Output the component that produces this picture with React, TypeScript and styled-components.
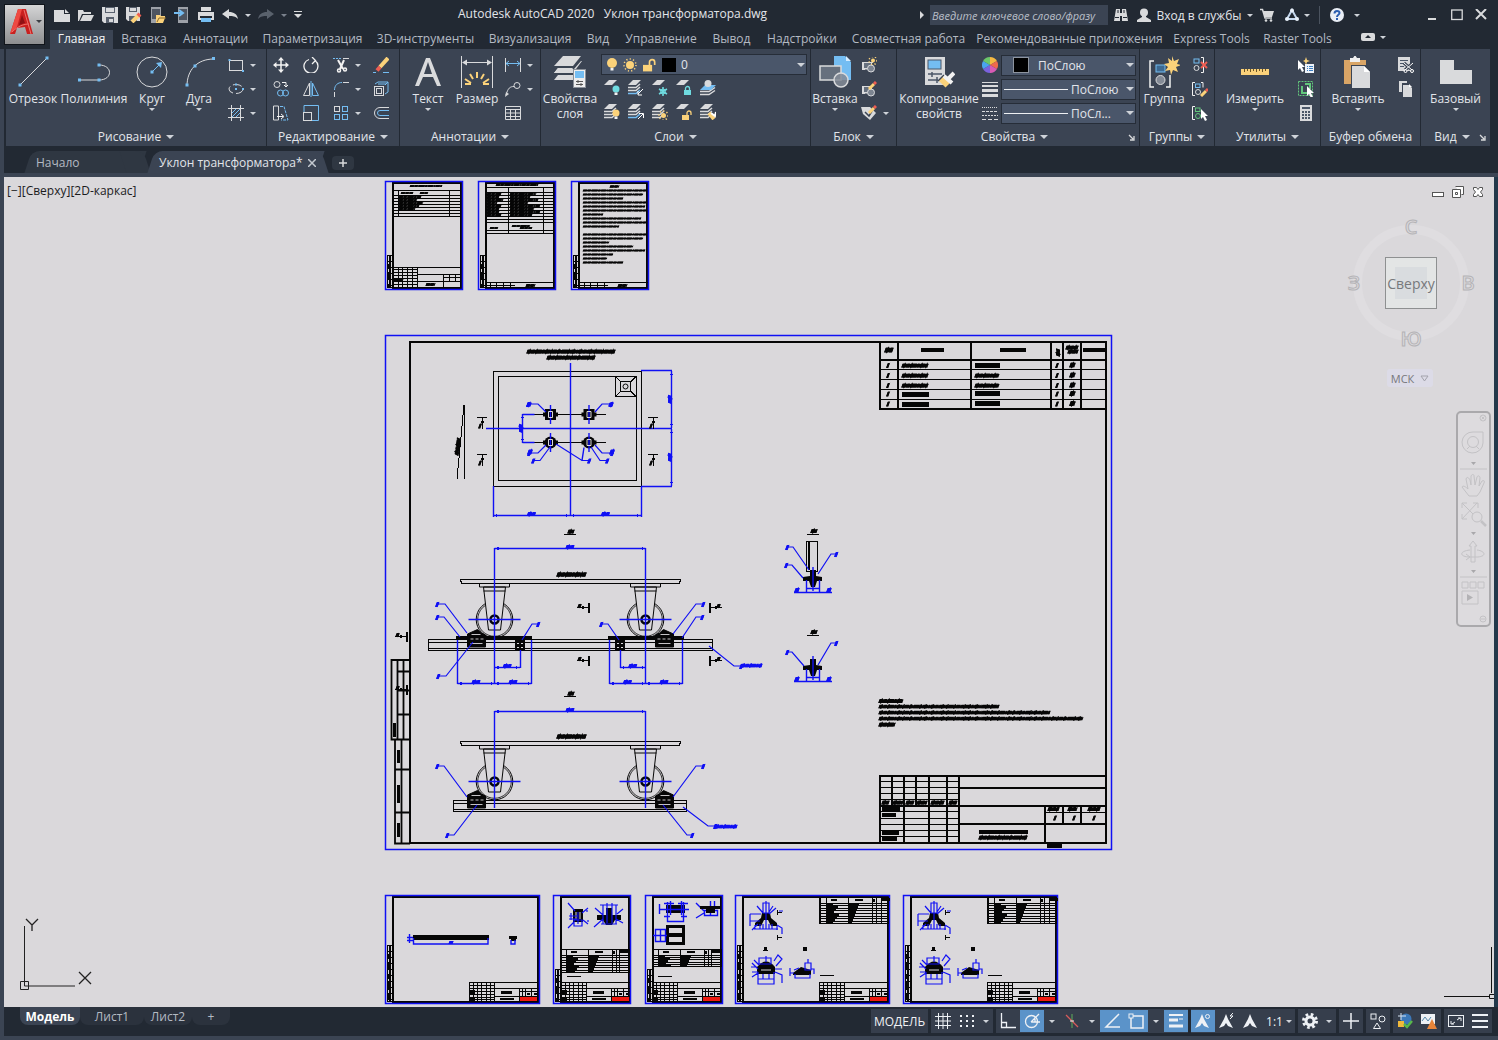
import React from "react";
import styled, { createGlobalStyle, css } from "styled-components";

const c = {
  bar: "#222933",
  panel: "#3b4453",
  field: "#4a566a",
  line: "#262d38",
  text: "#e2e5ea",
  dim: "#b4bac3",
  blue: "#74bdf2",
  grey: "#d9dadc",
  yellow: "#fbd27a",
  teal: "#6fdbe0",
  red: "#ee5d52",
  canvas: "#dad8db",
};

const Global = createGlobalStyle`
  *, *::before, *::after { box-sizing: border-box; }
  body { margin: 0; background: ${c.bar}; }
  body, button, input, select { font-family: "Open Sans", "Noto Sans", sans-serif; font-size: 12px; }
  button { margin: 0; padding: 0; border: 0; background: none; color: inherit; cursor: pointer; }
  svg { display: block; flex: none; }
`;

const Page = styled.div`
  display: flex;
  flex-direction: column;
  min-height: 100vh;
  color: ${c.text};
`;

const Arrow = styled.span<{ $big?: boolean; $color?: string }>`
  flex: none;
  width: 0;
  height: 0;
  border: solid transparent;
  border-width: ${(p) => (p.$big ? "4px 4px 0" : "3px 3px 0")};
  border-top-color: ${(p) => p.$color || "#cfd3d9"};
`;

/* ---------- header ---------- */

const Header = styled.header`
  display: grid;
  grid-template-columns: 45px minmax(0, 1fr);
  height: 49px;
`;

const AppButton = styled.button`
  && {
    margin: 4px 0 4px 4px;
    width: 41px;
    height: 41px;
    border: 1px solid #11151b;
    background: linear-gradient(#d5d5d6, #8d8e90);
    display: flex;
    align-items: center;
    gap: 1px;
    padding: 0 0 6px 4px;
  }
`;

const TitleBar = styled.div`
  display: flex;
  align-items: center;
  height: 30px;
`;

const QuickAccess = styled.div`
  display: flex;
  align-items: center;
  padding-left: 5px;
`;

const QuickButton = styled.button<{ $w?: number }>`
  display: grid;
  place-items: center;
  width: ${(p) => p.$w || 24}px;
  height: 24px;
`;

const DocTitle = styled.h1`
  flex: 1;
  margin: 0;
  font-size: 12px;
  line-height: 28px;
  font-weight: 400;
  text-align: center;
  white-space: pre;
  align-self: flex-start;
`;

const SearchBox = styled.input`
  width: 178px;
  height: 20px;
  border: 0;
  padding: 0 2px;
  margin: 0 3px 0 5px;
  background: ${c.panel};
  color: ${c.text};
  &::placeholder {
    color: #b9bfc8;
    font-size: 11px;
    font-style: italic;
    opacity: 1;
  }
`;

const InfoButton = styled.button<{ $w: number; $gap?: number }>`
  display: flex;
  align-items: center;
  justify-content: center;
  gap: ${(p) => p.$gap || 5}px;
  width: ${(p) => p.$w}px;
  height: 24px;
  white-space: nowrap;
`;

const Divider = styled.span`
  width: 1px;
  height: 18px;
  background: #4b535f;
`;

const WindowButtons = styled.div`
  display: flex;
  margin-left: 50px;
  padding-right: 5px;
`;

const TabBar = styled.nav`
  display: flex;
  align-items: flex-end;
  height: 19px;
  padding-left: 5px;
`;

const RibbonTab = styled.button<{ $w: number; $active?: boolean }>`
  && {
    width: ${(p) => p.$w}px;
    height: 19px;
    line-height: 18px;
    white-space: nowrap;
    display: flex;
    justify-content: center;
    color: ${(p) => (p.$active ? "#f2f4f7" : c.dim)};
    background: ${(p) => (p.$active ? c.panel : "none")};
  }
`;

/* ---------- ribbon ---------- */

const Workspace = styled.div`
  flex: 1;
  display: flex;
  flex-direction: column;
  border: solid ${c.panel};
  border-width: 0 0 4px 4px;
`;

const Ribbon = styled.div`
  display: flex;
  gap: 1px;
  height: 97px;
  margin: 0 8px 0 2px;
`;

const Panel = styled.section<{ $w: number; $grow?: boolean }>`
  flex: ${(p) => (p.$grow ? 1 : 0)} 0 ${(p) => p.$w}px;
  display: flex;
  flex-direction: column;
  background: ${c.panel};
`;

const PanelBody = styled.div`
  display: flex;
  height: 79px;
`;

const PanelTitle = styled.footer`
  display: flex;
  align-items: center;
  height: 18px;
  padding: 0 4px;
`;

const PanelName = styled.button`
  && {
    flex: 1;
    display: flex;
    align-items: center;
    justify-content: center;
    gap: 5px;
    line-height: 16px;
    white-space: nowrap;
  }
`;

const BigTool = styled.button<{ $w: number }>`
  && {
    flex: none;
    display: flex;
    flex-direction: column;
    align-items: center;
    width: ${(p) => p.$w}px;
    padding-top: 7px;
    line-height: 15px;
    white-space: pre-line;
  }
`;

const BigLabel = styled.span`
  display: flex;
  justify-content: center;
  text-align: center;
  margin: 3px 0 2px;
  white-space: pre;
`;

const ToolGrid = styled.div<{ $cols: string; $pad: number; $top?: number }>`
  display: grid;
  grid-template-columns: ${(p) => p.$cols};
  grid-auto-rows: 24px;
  align-content: start;
  padding: ${(p) => p.$top ?? 4}px 0 0 ${(p) => p.$pad}px;
`;

const SmallTool = styled.button`
  && {
    display: flex;
    align-items: center;
    gap: 6px;
  }
`;

const Stack = styled.div`
  flex: 1;
  display: flex;
  flex-direction: column;
  gap: 1px;
  padding: 5px 3px 0 2px;
`;

const PropRows = styled.div`
  flex: 1;
  display: grid;
  grid-auto-rows: 24px;
  padding: 4px 3px 0 1px;
`;

const PropRow = styled.div`
  display: grid;
  grid-template-columns: 16px minmax(0, 1fr);
  align-items: center;
  gap: 3px;
`;

const Combo = styled.div`
  display: flex;
  align-items: center;
  gap: 3px;
  height: 21px;
  padding: 0 1px 0 4px;
  border: 1px solid ${c.line};
  background: ${c.field};
`;

const Select = styled.select`
  flex: 1;
  min-width: 0;
  height: 18px;
  padding: 0;
  border: 0;
  appearance: none;
  background: transparent;
  color: ${c.text};
  option { color: #111; }
`;

const Swatch = styled.span<{ $edge?: boolean }>`
  flex: none;
  width: ${(p) => (p.$edge ? 16 : 14)}px;
  height: ${(p) => (p.$edge ? 16 : 14)}px;
  margin: 0 ${(p) => (p.$edge ? 6 : 2)}px 0 ${(p) => (p.$edge ? 7 : 1)}px;
  background: #000;
  border: ${(p) => (p.$edge ? "1px solid #8d949f" : 0)};
`;

const Stroke = styled.span`
  flex: none;
  width: 64px;
  height: 1px;
  margin-left: -2px;
  background: #eef0f3;
`;

/* ---------- file tabs ---------- */

const FileTabs = styled.nav`
  display: flex;
  align-items: flex-end;
  height: 31px;
  padding-left: 16px;
  border-bottom: 4px solid ${c.panel};
  background: ${c.bar};
`;

const FileTab = styled.div<{ $w: number; $active?: boolean }>`
  position: relative;
  display: flex;
  align-items: center;
  width: ${(p) => p.$w}px;
  height: 22px;
  padding: 2px 0 0 16px;
  z-index: 0;
  color: ${(p) => (p.$active ? c.text : c.dim)};
  &::before {
    content: "";
    position: absolute;
    z-index: -1;
    inset: 0 0 0 8px;
    transform: skewX(-18deg);
    border-radius: 8px 0 0 0;
    background: ${(p) => (p.$active ? c.panel : "#2f3742")};
  }
  &::after {
    content: "";
    position: absolute;
    z-index: -1;
    inset: 0 -4px 0 auto;
    width: 24px;
    transform: skewX(18deg);
    border-radius: 0 8px 0 0;
    background: ${(p) => (p.$active ? c.panel : "#2f3742")};
  }
`;

const TabName = styled.button`
  line-height: 20px;
  white-space: nowrap;
`;

const CloseTab = styled.button`
  && {
    margin-left: 4px;
    display: grid;
    place-items: center;
    width: 10px;
    height: 20px;
  }
`;

const AddTab = styled.button`
  && {
    width: 22px;
    height: 14px;
    margin: 0 0 3px 11px;
    border-radius: 4px;
    background: #2f3742;
    display: grid;
    place-items: center;
  }
`;

/* ---------- drawing area ---------- */

const Viewport = styled.main`
  position: relative;
  flex: 1;
  min-height: 600px;
  overflow: hidden;
  border-right: 4px solid #22384a;
  background: ${c.canvas};
  color: #1b1b1d;
`;

const ModelSpace = styled.svg`
  position: absolute;
  inset: 0;
  width: 100%;
  height: 100%;
`;

const ViewLabel = styled.div`
  position: absolute;
  left: 3px;
  top: 5px;
  line-height: 17px;
`;

const DocControls = styled.div`
  position: absolute;
  right: 9px;
  top: 7px;
  display: flex;
  gap: 6px;
`;

const Ucs = styled.svg`
  position: absolute;
  left: 14px;
  bottom: 11px;
`;

const Cursor = styled.svg`
  position: absolute;
  right: 0;
  bottom: 0;
`;

const ViewCube = styled.div`
  position: absolute;
  right: 18px;
  top: 40px;
  width: 130px;
  height: 132px;
  display: grid;
  grid-template-columns: 16px 1fr 16px;
  grid-template-rows: 20px 1fr 20px;
  place-items: center;
  &::before {
    content: "";
    position: absolute;
    inset: 8px 7px;
    border: 9px solid #dfdde0;
    border-radius: 50%;
  }
`;

const Compass = styled.button<{ $area: string }>`
  && {
    position: relative;
    grid-area: ${(p) => p.$area};
    font-size: 20px;
    line-height: 20px;
    font-weight: 600;
    color: ${c.canvas};
    -webkit-text-stroke: 1px #b4b3b6;
  }
`;

const CubeFace = styled.button`
  && {
    position: relative;
    grid-area: 2 / 2;
    width: 52px;
    height: 52px;
    border: 1px solid #8e9091;
    background: linear-gradient(#d9dcdf, #d9dcdf) center / 32px 32px no-repeat #e3e5e5;
    color: #77797c;
    font-size: 14px;
    display: flex;
    align-items: center;
    justify-content: center;
    white-space: nowrap;
  }
`;

const Wcs = styled.button`
  && {
    position: absolute;
    right: 61px;
    top: 192px;
    width: 46px;
    height: 18px;
    border-radius: 3px;
    background: #dcdbe7;
    color: #77777c;
    font-size: 11px;
    display: flex;
    align-items: center;
    justify-content: center;
    gap: 6px;
  }
`;

const NavBar = styled.div`
  position: absolute;
  right: 3px;
  top: 234px;
  width: 35px;
  height: 216px;
  border: 2px solid #aaa9ac;
  border-radius: 5px;
  background: #dddbde;
`;

/* ---------- status bar ---------- */

const StatusBar = styled.footer`
  display: flex;
  justify-content: space-between;
  height: 29px;
  background: ${c.bar};
`;

const LayoutTabs = styled.div`
  display: flex;
  padding-left: 16px;
`;

const LayoutTab = styled.button<{ $w: number; $active?: boolean }>`
  && {
    width: ${(p) => p.$w}px;
    height: 18px;
    line-height: 17px;
    border-radius: 0 0 8px 8px;
    color: ${(p) => (p.$active ? "#fff" : c.dim)};
    font-weight: ${(p) => (p.$active ? 700 : 400)};
    background: ${(p) => (p.$active ? c.panel : "#2b323d")};
  }
`;

const StatusTools = styled.div`
  display: flex;
  gap: 3px;
  padding: 2px 6px 3px 0;
`;

const StatusGroup = styled.div`
  display: flex;
  align-items: center;
  background: #363e4c;
`;

const StatusButton = styled.button<{ $w?: number; $on?: boolean }>`
  && {
    width: ${(p) => p.$w || 24}px;
    height: 22px;
    display: flex;
    align-items: center;
    justify-content: center;
    white-space: nowrap;
    color: #f0f2f5;
    ${(p) => p.$on && css`background: #5b93c9;`}
  }
`;

/* ---------- icons ---------- */

const S = ({ n = 16, w, h, box, children }: any) => (
  <svg width={w || n} height={h || n} viewBox={box || `0 0 ${w || n} ${h || n}`} fill="none" stroke={c.grey} aria-hidden="true">
    {children}
  </svg>
);
const F = { stroke: "none" };

const Dot = ({ x, y, s = 3 }: any) => <rect x={x - s / 2} y={y - s / 2} width={s} height={s} fill={c.blue} stroke="none" />;

const LogoA = () => (
  <S w={26} h={30}>
    <path {...F} fill="#c9201f" d="M9 2h8l7 25h-6l-2-7-8 1-2 6H1z" />
    <path {...F} fill="#ee4a42" d="M9 2h4L8 20l-7 7z" />
    <path {...F} fill="#8f1114" d="M13 8l3 8-6 2z" />
    <path stroke="#f0706a" d="M3 25c6-6 12-8 17-8M15 3l7 24" />
  </S>
);

const I = {
  newFile: <S><path {...F} fill={c.grey} d="M0 3h10v4h6v8H0z" /><path {...F} fill={c.grey} d="M11 2l4 4h-4z" /></S>,
  open: <S><path {...F} fill={c.grey} d="M0 3h5l1 2h7v2H4L1 14H0z" /><path {...F} fill={c.grey} d="M5 8h11l-3 6H2z" /></S>,
  save: <S><path {...F} fill={c.grey} d="M0 0h16v16H2l-2-2z" /><path {...F} fill="#59616e" d="M3 0h10v6H3zM4 10h8v6H4z" /><path {...F} fill={c.grey} d="M4 1h8v4H4zM7 12h4v3H7z" /></S>,
  saveAs: <S><path {...F} fill={c.grey} d="M0 0h14v14H2l-2-2z" /><path {...F} fill="#59616e" d="M3 0h8v5H3zM3 9h8v5H3z" /><path {...F} fill={c.grey} d="M4 1h6v3H4z" /><path stroke={c.yellow} strokeWidth="4" d="M6 15l7-7" /><path stroke={c.red} strokeWidth="4" d="M12 9l2-2" /></S>,
  openMobile: <S><path {...F} fill="#9da1a8" d="M1 0h10v16H1z" /><path {...F} fill="#4e5561" d="M2 2h8v10H2z" /><path {...F} fill={c.yellow} d="M6 8h4l1 1h4v2l-2 5H6z" /><path stroke="#8b6a2c" d="M7 15l2-4h7" /></S>,
  saveMobile: <S><path {...F} fill="#9da1a8" d="M4 0h10v16H4z" /><path {...F} fill="#4e5561" d="M5 2h8v11H5z" /><path stroke={c.blue} strokeWidth="2" d="M0 6h8M5 3l4 3-4 3" /></S>,
  print: <S><path {...F} fill={c.grey} d="M3 0h10v4H3zM0 5h16v8H0z" /><path {...F} fill={c.bar} d="M2 9h12v2H2z" /><path {...F} fill={c.blue} d="M3 11h10v4H3z" /></S>,
  undo: <S><path {...F} fill={c.grey} d="M0 7l7-5v3c5 0 8 2 9 7-3-3-5-3-9-3v3z" /></S>,
  redo: <S><path {...F} fill="#59616c" d="M16 7L9 2v3C4 5 1 7 0 12c3-3 5-3 9-3v3z" /></S>,
  custom: <S w={8} h={8}><path stroke={c.grey} d="M0 .5h8" /><path {...F} fill={c.grey} d="M0 3h8L4 7z" /></S>,
  binoculars: <S n={14}><path {...F} fill={c.grey} d="M2 1h4v4h2V1h4l2 12H8V8H6v5H0z" /><path stroke={c.bar} d="M1 9.500h4M9 9.500h4M4 2v3M10 2v3" /></S>,
  user: <S n={14}><circle {...F} fill={c.grey} cx="7" cy="4.500" r="4" /><path {...F} fill={c.grey} d="M5 7h4v2l5 3v2H0v-2l5-3z" /></S>,
  cart: <S n={14}><path {...F} fill={c.grey} d="M3 3h11l-2 6H5z" /><path stroke={c.grey} strokeWidth="1.500" d="M0 1.500h2.500L5 10h7" /><circle {...F} fill={c.grey} cx="6" cy="12.500" r="1.300" /><circle {...F} fill={c.grey} cx="11" cy="12.500" r="1.300" /></S>,
  a360: <S n={14}><path stroke="#c5d8ee" strokeWidth="2" d="M7 2L2 11h10z" /><circle {...F} fill="#e8f0fa" cx="7" cy="2.500" r="2" /><circle {...F} fill="#e8f0fa" cx="2" cy="11" r="2" /><circle {...F} fill="#e8f0fa" cx="12" cy="11" r="2" /></S>,
  min: <S n={12}><path stroke={c.grey} strokeWidth="2" d="M2 10h8" /></S>,
  max: <S n={12}><rect stroke={c.grey} strokeWidth="1.300" x=".7" y="1" width="10.500" height="9.500" /></S>,
  close: <S n={12}><path stroke={c.grey} strokeWidth="2" d="M1 0l10 10M11 0L1 10" /></S>,

  line: <S n={32}><path d="M3 29L31 1" /><Dot x={3} y={29} /><Dot x={30} y={2} /></S>,
  pline: <S n={32}><path d="M1 24h20c14 0 14-15 0-15" /><Dot x={1.500} y={24} /><Dot x={21} y={24} /><Dot x={21} y={9} /></S>,
  circle: <S n={32}><circle cx="16" cy="16" r="15" /><path stroke={c.blue} d="M17 15l6-6" /><path {...F} fill={c.blue} d="M26 6l-1 6-5-5z" /><Dot x={16} y={16} /></S>,
  arc: <S n={32}><path d="M4 30C4 14 14 3 31 3" /><Dot x={4} y={29} /><Dot x={12} y={10} /><Dot x={30.500} y={2.500} /></S>,
  rect: <S><rect x="1.500" y="3.500" width="13" height="10" /><Dot x={1.500} y={3} s={2} /><Dot x={15} y={14} s={2} /></S>,
  ellipse: <S><ellipse cx="8" cy="8" rx="7" ry="4.500" strokeDasharray="9 3" /><Dot x={8} y={8} s={2} /><Dot x={15} y={8} s={2} /><Dot x={8} y={3.500} s={2} /></S>,
  hatch: <S><path d="M3.500 0v16M12.500 0v16M0 3.500h16M0 12.500h16" /><path stroke={c.blue} d="M4 8l4-4M4 12l8-8M8 12l4-4" /></S>,
  move: <S><path stroke="#f2f2f2" strokeWidth="1.500" d="M8 2v12M2 8h12" /><path {...F} fill="#f2f2f2" d="M8 0l3 3.500H5zM8 16l3-3.500H5zM0 8l3.500-3v6zM16 8l-3.500-3v6z" /></S>,
  rotate: <S><path stroke="#f2f2f2" strokeWidth="1.300" d="M12 3.500a7 7 0 1 1-6-1" /><path stroke="#f2f2f2" strokeWidth="1.300" d="M9 0l3.500 3.500L9 7" /></S>,
  trim: <S><path stroke={c.blue} strokeDasharray="2 1" d="M0 1.500h9" /><path d="M10 1.500h6" /><path stroke="#f2f2f2" strokeWidth="2" d="M5 3l5 9M11 3L7 12" /><circle stroke="#f2f2f2" strokeWidth="1.500" cx="6" cy="13.500" r="1.500" /><circle stroke="#f2f2f2" strokeWidth="1.500" cx="12" cy="12.500" r="1.500" /></S>,
  erase: <S><path stroke={c.blue} d="M0 15.500h3M10 15.500h6" /><path stroke={c.yellow} strokeWidth="4" d="M7 10l8-9" /><path stroke={c.red} strokeWidth="4" d="M4 13.500L7 10" /></S>,
  copy: <S><circle cx="4" cy="3.500" r="3" /><path stroke="#f2f2f2" d="M9 1.500h4v4M11 4l2 2 2-2" /><circle stroke={c.blue} cx="7.500" cy="12" r="3" /><circle stroke={c.blue} cx="12.500" cy="12" r="3" /></S>,
  mirror: <S><path d="M6.500 2v12.500h-6z" /><path stroke={c.blue} d="M9.500 2v12.500h6zM8 0v16" /></S>,
  fillet: <S><path stroke={c.blue} d="M1.500 9C1.500 4 5 1.500 9 1.500" /><path d="M10 1.500h6M1.500 11v5" /></S>,
  explode: <S><rect x="1.500" y="5.500" width="9" height="9" /><rect x="3.500" y="7.500" width="5" height="5" /><path stroke={c.blue} d="M2 3l3-2h10l-3 3M15 1v10l-3 2M5 3h8" /></S>,
  stretch: <S><path d="M.5 1h5v14h-5z" /><path stroke={c.blue} strokeDasharray="3 1" d="M7 1.500h4L15 15H8" /><path stroke="#f2f2f2" d="M4 11.500h6M8 9l3 2.500L8 14" /></S>,
  scale: <S><path stroke={c.blue} d="M1 7V.5h14.500v15H9" /><rect x=".5" y="7.500" width="8" height="8" /></S>,
  array: <S><rect x="1.500" y="1.500" width="5" height="5" /><g stroke={c.blue}><rect x="9.500" y="1.500" width="5" height="5" /><rect x="1.500" y="9.500" width="5" height="5" /><rect x="9.500" y="9.500" width="5" height="5" /></g></S>,
  offset: <S><path d="M16 2.500H7a5.500 5.500 0 0 0 0 11h9" /><path stroke={c.blue} d="M16 5.500H7a2.500 2.500 0 0 0 0 5h9" /></S>,
  text: <S n={32}><path {...F} fill={c.grey} d="M14 2h4l11 28h-4l-4-9H11l-4 9H3zm2 4l-4 12h8z" fillRule="evenodd" /></S>,
  dimension: <S n={32}><path d="M.5 0v32M31.500 0v32M3 6.500h26" /><path {...F} fill={c.grey} d="M1 6.500l5-3v6zM31 6.500l-5-3v6z" /><g stroke={c.yellow} strokeWidth="2"><path d="M16 16v6M9 18l3 5M23 18l-3 5M4 23l6 4M28 23l-6 4M4 28h6M28 28h-6" /></g></S>,
  dimLinear: <S><path d="M.5 1v14M15.500 1v14" /><path stroke={c.blue} d="M1 6.500h14M4 4L1 6.500 4 9M12 4l3 2.500L12 9" /></S>,
  leader: <S><path d="M1 14C3 7 5 5.500 9 5.500" /><circle cx="12" cy="4.500" r="3" /><path {...F} fill={c.grey} d="M0 16l1-5 3 2z" /></S>,
  table: <S><path d="M.5 1.500h15v13H.5zM.5 4.500h15M.5 8h15M.5 11.500h15M5.500 4v10M10.500 4v10" /></S>,
  layerProps: <S n={32}><g {...F} fill={c.grey}><path d="M9 0h18l-8 10H0z" /><path d="M4 12l-4 5h19l9-12-1 0-7 8H4z" /><path d="M4 19l-4 5h19v-5z" /><path d="M4 12h15l-4 5H0z" /></g><g stroke={c.panel}><path d="M1 11h18l8-8M1 18h17" /></g><rect x="19.500" y="13.500" width="12" height="18" fill="#eee" stroke="#8a9099" /><rect {...F} x="21" y="15" width="9" height="7" fill={c.blue} /><path stroke="#555" d="M22 25.500h7M22 28.500h7M24 24v3M27 27v3" /></S>,
  insert: <S n={32}><path {...F} fill={c.blue} d="M15 0h11l6 6v18H15z" /><path {...F} fill="#d5ecff" d="M27 0l5 5h-5z" /><rect x="1" y="10" width="21" height="14" fill="#66707e" strokeWidth="1.500" /><circle cx="22" cy="24" r="7" fill="#848b96" fillOpacity=".85" strokeWidth="1.500" /></S>,
  copyProps: <S n={32}><rect {...F} x="2" y="1" width="20" height="28" fill={c.grey} /><rect x="5" y="4" width="13" height="9" fill={c.blue} stroke="#4b5768" /><path stroke="#4b5768" strokeWidth="1.500" d="M5 18h14M5 24h10M9 16v5M14 21v6" /><path stroke={c.yellow} strokeWidth="7" d="M18 22l7 7" /><path stroke={c.panel} strokeWidth="1.500" d="M15 25l6-6" /><path stroke="#f2f2f2" strokeWidth="4" d="M21 20l8 7M26 22l5-5" /></S>,
  group: <S n={32}><path stroke="#f2f2f2" strokeWidth="1.500" d="M6 5H2v26h4M18 31h4V19" /><rect x="8" y="9" width="9" height="7" stroke={c.blue} fill="#3e6a92" /><circle cx="12.500" cy="24" r="4.500" fill="#848b96" /><path {...F} fill={c.yellow} d="M24 0l2 5 5-2-2 5 4 1-5 2 2 5-5-2-2 5-1-5-5 1 3-4-4-3 5-1-1-5 4 3z" /></S>,
  measure: <S n={32}><rect {...F} x="2" y="13" width="28" height="6" fill={c.yellow} /><path stroke="#6b5526" d="M5.500 13v3M8.500 13v2M11.500 13v3M14.500 13v2M17.500 13v3M20.500 13v2M23.500 13v3M26.500 13v2" /></S>,
  paste: <S n={32}><path {...F} fill="#d9a566" d="M2 4h22v24H2z" /><path {...F} fill="#f0f0f0" d="M8 2h3l2-3 2 3h3v4H8z" /><path {...F} fill={c.panel} d="M9 9h19v23H9z" /><path {...F} fill={c.grey} d="M10 10h12l6 6v16H10z" /><path {...F} fill="#fff" d="M22 10l6 6h-6z" /></S>,
  base: <S n={32}><path {...F} fill={c.grey} d="M0 4h14v10h18v14H0z" /></S>,
};

const Sheet = ({ y = 2, blue }: any) => (
  <path {...F} fill={blue ? c.blue : c.grey} d={`M5 ${y - 2}h8l-5 5H0z`} />
);
const Sheets = ({ blue }: any) => (
  <g>
    <Sheet y={2} />
    <path strokeWidth="1.500" d="M0 7.500h8l4-3.500M0 10.500h8l4-3.500" />
    <path strokeWidth="1.500" stroke={blue ? c.blue : c.grey} d="M0 13.500h8l4-3.500" />
  </g>
);
const Bulb = ({ x, y, r = 3.500, fill = c.yellow }: any) => (
  <g {...F}><circle cx={x} cy={y} r={r} fill={fill} /><rect x={x - 1.500} y={y + r} width="3" height="2.500" fill="#f2f2f2" /></g>
);
const Sun = ({ x, y, r = 3, color = c.yellow }: any) => (
  <g><circle {...F} cx={x} cy={y} r={r} fill={color} /><circle cx={x} cy={y} r={r + 2} stroke={color} strokeWidth="1.500" strokeDasharray="1.200 2.200" /></g>
);
const Lock = ({ x, y, s = 1, open, color = c.yellow }: any) => (
  <g transform={`translate(${x} ${y}) scale(${s})`}><rect {...F} width="7" height="5" y="3" fill={color} /><path stroke={color} strokeWidth="1.300" d={open ? "M5 3V1a2 2 0 0 1 4 0v2" : "M1.500 3V1.500a2 2 0 0 1 4 0V3"} /></g>
);
const Pencil = ({ x, y }: any) => (
  <g transform={`translate(${x} ${y})`}><path stroke={c.yellow} strokeWidth="3" d="M0 7l5-5" /><path stroke={c.red} strokeWidth="3" d="M5 2l2-2" /></g>
);
const Pointer = ({ x, y }: any) => <path {...F} fill="#fff" transform={`translate(${x} ${y})`} d="M0 0v10l2-2 2 4 2-1-2-4h3z" />;
const BlockShape = () => <g><path d="M3 5.500h9M1.500 5v7h5M1 12.500h3" fill="none" /><rect x="2.500" y="5.500" width="8" height="6" fill="#66707e" /><circle cx="10" cy="11.500" r="3.500" fill="#7c8490" /></g>;
const GroupShape = ({ col = c.blue }: any) => <g><path stroke="#f2f2f2" d="M3 1.500H.5v13H3" /><rect x="3.500" y="3" width="4.500" height="3.500" stroke={col} /><circle cx="6" cy="11" r="2.500" stroke={col === c.blue ? c.grey : col} /></g>;

const layerIcons = [
  ["Отключить", <S key="a"><Sheet /><Bulb x={12} y={9} fill={c.teal} /></S>],
  ["Изолировать", <S key="b"><Sheets blue /><path stroke="#fff" d="M15 9l-5 5M10 11v4h4" /></S>],
  ["Заморозить", <S key="c"><Sheet /><path stroke={c.teal} strokeWidth="1.500" d="M11 7v9M7 9l8 5M15 9l-8 5" /><circle cx="11" cy="11.500" r="2.500" stroke={c.teal} /></S>],
  ["Блокировать", <S key="d"><Sheet /><Lock x={8} y={7} color={c.teal} /></S>],
  ["Сделать текущим", <S key="e"><path strokeWidth="1.500" d="M0 11.500h9l6-4M0 14.500h9l6-4" /><path {...F} fill={c.blue} d="M5 5h11l-5 5H0z" /><circle {...F} fill={c.grey} cx="8" cy="3.500" r="3.500" /></S>],
  ["Включить все", <S key="f"><Sheets /><Bulb x={12} y={9} /></S>],
  ["Отменить изоляцию", <S key="g"><Sheets blue /><path stroke="#fff" d="M10 15l5-5M11 9.500h4.500V14" /></S>],
  ["Разморозить", <S key="h"><Sheets /><Sun x={11.500} y={11.500} r={2.500} /></S>],
  ["Разблокировать", <S key="i"><Sheet /><Lock x={6} y={8} open /></S>],
  ["Соответствие", <S key="j"><Sheets /><path stroke={c.yellow} strokeWidth="4" d="M9 9l5 6" /><path stroke="#fff" strokeWidth="2" d="M11 9l4 3 1-4" /></S>],
] as [string, React.ReactNode][];

const Big = ({ w, icon, label, menu }: any) => (
  <BigTool $w={w}>
    {icon}
    <BigLabel>{label}</BigLabel>
    {menu && <Arrow />}
  </BigTool>
);
const Small = ({ icon, label, menu }: any) => (
  <SmallTool aria-label={label} title={label}>
    {icon}
    {menu && <Arrow />}
  </SmallTool>
);
const RibbonPanel = ({ w, name, menu = true, launcher, grow, children }: any) => (
  <Panel $w={w} $grow={grow}>
    <PanelBody>{children}</PanelBody>
    <PanelTitle>
      <PanelName>{name}{menu && <Arrow $big />}</PanelName>
      {launcher && <S n={7}><path d="M1 1l4 4M6 2v4H2" strokeWidth="1.300" /></S>}
    </PanelTitle>
  </Panel>
);

/* ---------- model space drawing ---------- */

const BLUE = "#1010f4";
const INK = "#060606";

/* Lettering too small to resolve at this zoom level is shown as slanted ragged strokes. */
const Note = ({ x, y, w, h = 4, col = INK, r = 0 }: any) => (
  <g stroke={col} transform={`translate(${x} ${y}) rotate(${r}) skewX(-20)`} shapeRendering="auto">
    <path strokeWidth={h} strokeDasharray="4 .7 3 .9 6 .6 2 .8 5 1 1 .7" d={`M0 0h${w}`} />
    <path strokeWidth={h * 0.85} d={`M0 ${h > 3 ? 0.2 : 0}h${w}`} />
    {h > 3 && <path strokeWidth={h + 1.400} strokeDasharray="1 6 1 9 1 4" d={`M2 0h${Math.max(w - 3, 0.1)}`} />}
  </g>
);
const B = ({ d, w = 1.400 }: any) => <path d={d} stroke={BLUE} strokeWidth={w} shapeRendering="auto" />;
const K = ({ d, w = 1 }: any) => <path d={d} stroke={INK} strokeWidth={w} />;
const DimH = ({ x1, x2, y }: any) => (
  <g><B d={`M${x1} ${y}H${x2}`} /><path fill={BLUE} d={`M${x1} ${y}l4-1.500v3zM${x2} ${y}l-4-1.500v3z`} />
    <Note x={(x1 + x2) / 2 - 4} y={y - 1.500} w={8} col={BLUE} /></g>
);
const DimV = ({ x, y1, y2 }: any) => (
  <g><B d={`M${x} ${y1}V${y2}`} /><path fill={BLUE} d={`M${x} ${y1}l-1.500 4h3zM${x} ${y2}l-1.500-4h3z`} />
    <Note x={x - 1.500} y={(y1 + y2) / 2 - 4} w={8} r={90} col={BLUE} /></g>
);
const Leader = ({ p }: { p: number[][] }) => (
  <g><B d={"M" + p.map((q) => q.join(" ")).join("L")} w={1.200} /><Note x={p[0][0] - 1} y={p[0][1] + 0.500} w={2.500} h={5} col={BLUE} /></g>
);

const Caster = ({ x, y }: any) => (
  <g transform={`translate(${x} ${y})`} shapeRendering="auto">
    <circle r="18.300" stroke={INK} strokeWidth="1" /><circle r="16.800" stroke={INK} strokeWidth=".8" />
    <path fill={c.canvas} stroke={INK} d="M-11-32.500H11L6 10.500H-6z" />
    <path stroke={INK} d="M-15-36h30v3.500h-30zM-11-28.500h22" />
    <circle r="4" stroke={INK} strokeWidth="2.500" />
    <path stroke={BLUE} strokeWidth="1.400" d="M-26 0h52" />
  </g>
);
const Chock = ({ x, y, flip }: any) => (
  <g transform={`translate(${x} ${y}) scale(${flip ? -1 : 1} 1)`} stroke={INK} shapeRendering="auto">
    <path fill={INK} d="M-9 8V-5L1-9.500 5-6l4 2V8z" />
    <path stroke={c.canvas} strokeWidth=".9" d="M-5-4.500h9M-6 0h3M-1 0h3M4 0h3M-6 4.500H6" />
  </g>
);
const Section = ({ x, y, dir }: any) => (
  <g><K d={`M${x} ${y - 5}v10`} w={2} /><K d={`M${x} ${y}h${dir * 12}`} /><path fill={INK} d={`M${x + dir * 3} ${y}l${dir * 4}-2v4z`} /><Note x={x + dir * 9 - 2} y={y - 1.500} w={3} h={4} /></g>
);

const TransformerView = ({ dy }: any) => (
  <g transform={`translate(0 ${dy})`}>
    <K d="M564 534.500h12" /><Note x={568} y={531.500} w={6} h={4} />
    <K d="M460.500 579.500H680.500l-1 4H461.500z" />
    <Note x={557} y={574.500} w={29} h={4.500} />
    <Caster x={494.500} y={619.500} /><Caster x={645.500} y={619.500} />
  </g>
);

const Wheel = ({ x, y, round }: any) => (
  <g transform={`translate(${x} ${y})`} shapeRendering="auto">
    {round ? <circle r="6" fill={INK} /> : <rect x="-5.500" y="-5.500" width="11" height="11" fill={INK} />}
    <path stroke={INK} strokeWidth="4" d="M-7.500 0H7.500" />
    <path stroke={BLUE} strokeWidth="1.400" d="M0-9.500V9.500" /><path stroke={c.canvas} d="M-2-3v6M2-3v6M-2-3h4M-2 3h4" />
  </g>
);

const TitleBlock = ({ x, y }: any) => (
  <g>
    {[0, 3, 6, 9, 12, 15, 17].map((i) => <K key={i} d={`M${x} ${y + i + 0.500}h25`} />)}
    {[0, 4, 8, 12, 17, 21, 25].map((i) => <K key={i} d={`M${x + i + 0.500} ${y}v20`} />)}
    <K d={`M${x} ${y + 0.500}h69M${x + 25} ${y + 6.500}h44M${x + 25} ${y + 14.500}h44M${x + 50.500} ${y + 6}v14M${x + 50} ${y + 9.500}h19M${x + 53.500} ${y + 6}v8M${x + 56.500} ${y + 6}v8M${x + 62.500} ${y + 6}v8`} />
    <K d={`M${x + 32} ${y + 10.500}h11`} w={3} /><K d={`M${x + 31} ${y + 17}h14`} w={2} />
    <K d={`M${x + 1} ${y + 10}h5M${x + 1} ${y + 17}h5`} w={4} />
    <K d={`M${x + 58} ${y + 11.500}h3M${x + 65} ${y + 11.500}h3`} w={2} />
    <rect x={x + 51} y={y + 15} width="17" height="4" fill="#ee1a10" />
  </g>
);
const SideStrip = ({ x, y1, y2 }: any) => {
  const rows = [];
  for (let y = y1; y < y2; y += 6) rows.push(<K key={y} d={`M${x} ${y}h6`} />);
  return <g><K d={`M${x} ${y1}h6V${y2}h-6zM${x + 2.500} ${y1}V${y2}`} w={1.500} /><path stroke={INK} strokeWidth="1.500" strokeDasharray="5 3 8 4" d={`M${x + 1} ${y1 + 8}V${y2}`} />{rows}</g>;
};
const Frame = ({ x, y, w, h, side = 58 }: any) => (
  <g>
    <rect x={x + 7.500} y={y + 1.500} width={w - 9} height={h - 3} stroke={INK} strokeWidth="1.500" />
    <SideStrip x={x + 2} y1={y + h - side} y2={y + h - 2} />
    <rect x={x} y={y} width={w} height={h} stroke={BLUE} strokeWidth="1.500" shapeRendering="auto" />
  </g>
);
const Spec = ({ x, y, w, h, cols, rows = 7 }: any) => (
  <g>
    <K d={`M${x} ${y}h${w}v${h}h${-w}z`} w={1.300} />
    {Array.from({ length: rows }, (_, i) => {
      const ry = Math.round(y + 5 + (i * (h - 5)) / rows) + 0.5;
      return <g key={i}><K d={`M${x} ${ry}h${w}`} /><K d={`M${x + cols[0] + 1} ${ry + 1}h${6 + ((i * 5) % 7)}`} w={2} /><K d={`M${x + cols[1] + 1} ${ry + 1}h${10 - i}`} w={2} /></g>;
    })}
    {cols.map((q: number) => <K key={q} d={`M${x + q + 0.500} ${y}v${h}`} />)}
    <K d={`M${x + cols[0] + 5} ${y + 2.500}h6M${x + cols[1] + 7} ${y + 2.500}h8M${x + cols[2] + 1} ${y + 3}h2M${x + cols[4] + 1} ${y + 2}h8`} w={2.500} />
  </g>
);
const Detail = ({ x, y, kind }: any) => (
  <g transform={`translate(${x} ${y})`} shapeRendering="auto">
    {kind === "foot" && <g>
      <path fill={INK} d="M-4-4h8l1 5 6 5v3H5L2 3h-4l-3 6h-6V6l6-5z" />
      <B d="M-3-14h6v10h-6zM-16-3h11M-16 4h10M-16-3v12M-9-11l6 7M10-9L3-3M7-11L3-5M-14 13l6-6M-12 12h24M-11 8v4M-6 7v5M-3 7v5M3 7v5M6 7v5M11 9v4M0-16v28M11 8l5 3v6M13-6h4" w={1.200} /></g>}
    {kind === "wheel" && <g>
      <path fill={INK} d="M-9-2q9-11 18 0v7H-9z" />
      <path stroke={c.canvas} d="M-5 1H5" />
      <B d="M-7-11H5v6H-7zM-8 10H8v5H-8zM-14-6l6 6M-14 8l6-4M-12-9l5 5M8-8l4-6 4 4-6 7M9 3l7 3v8M9 0h7M-15-2h6M-14 3h6M-8 3v12M8 3v12M0-13v6M-3 5v5M3 5v5" w={1.200} /></g>}
    {kind === "wedge" && <g>
      <path fill={INK} d="M-9 4l8-6 10 3v5H-9z" />
      <B d="M-12-1v8M-12 4h4M-7 5v4H8V5M3-6h6v7H3zM6-10v4M9 0h3v5M-8 1l5-2" w={1.200} /></g>}
    {kind === "clamp" && <g>
      <path fill={INK} d="M-5-7H5v13H-5z" /><path stroke={c.canvas} d="M-2-4v7M2-4v7" />
      <B d="M-10-13l7 8M10-8L4-3M-9 0h9M-9 3h8M-10 12l6-6M10 8L5 4M-4 4h8v6h-8zM-7-3v7M0-4v12M9-6v2M10 4v2" w={1.200} /></g>}
    {kind === "cross" && <g>
      <path fill={INK} d="M-3-8h6v7h9v5H6l-3 5h-6l-3-5h-6v-5h9z" />
      <B d="M-6-11H7v19H-6zM-2-13V7M3-13V7M-14-8l8 7M14-7L8-2M-15 11l9-8M14 7L7 3M-8 8H8M-9-11H9" w={1.200} /></g>}
  </g>
);

const Lines = ({ x, y, list, gap = 4, h = 2 }: any) => (
  <g>{list.map((w: number, i: number) => w > 0 && <Note key={i} x={x} y={y + i * gap} w={w} h={h} />)}</g>
);

const Drawing = () => (
  <ModelSpace fill="none" role="img" aria-label="Чертёж">
    <g transform="translate(-4 -177)" shapeRendering="crispEdges">
      {/* text sheets */}
      <Frame x={385.500} y={181.500} w={77} h={108} side={34} />
      <Note x={410} y={186} w={32} h={2} />
      {[190, 195, 198, 201, 204, 207, 210, 213, 216].map((y) => <K key={y} d={`M392 ${y}.5h69`} />)}
      <K d="M398.500 190v26M449.500 190v26" /><Note x={401} y={193} w={12} h={2} /><Note x={420} y={193} w={8} h={2} />
      <Lines x={399} y={197} list={[22, 18, 24, 20, 16, 0]} gap={3} />
      <Frame x={478.500} y={181.500} w={77} h={108} side={34} />
      <Note x={496} y={185} w={42} h={2} />
      {[187, 192, 195, 198, 201, 204, 207, 210, 213, 216, 219, 222, 230, 233].map((y) => <K key={y} d={`M485 ${y}.5h69`} />)}
      <K d="M508.500 187v46M543.500 187v46" /><Lines x={510} y={194} list={[26, 20, 28, 18, 30, 24, 30, 22]} gap={3} />
      <Lines x={487} y={194} list={[14, 12, 16, 10, 14, 12, 12, 14]} gap={3} />
      <Note x={512} y={226} w={18} h={2} /><Note x={490} y={228} w={8} h={2} /><Note x={520} y={228} w={12} h={2} />
      <Frame x={571.500} y={181.500} w={77} h={108} side={34} />
      <Note x={610} y={186.500} w={9} h={2.500} />
      <Lines x={583} y={190.500} list={[63, 60, 40, 63, 62, 63, 20, 58, 63, 36, 0, 63, 60, 26, 50, 62, 30, 24, 40]} />
      {[269, 272, 275, 278, 281, 284].map((y) => <K key={y} d={`M392 ${y}.5h25`} />)}
      {[398, 402, 407, 412, 417].map((x) => <K key={x} d={`M${x}.5 268v20`} />)}
      <K d="M392 267.500h69M417 274.500h44M417 281.500h44M443.500 274v14M443 277.500h18M449.500 274v7M455.500 274v7" />
      <Note x={426} y={284.500} w={9} h={3} /><Note x={393} y={280} w={10} h={3} />
      <K d="M485 282.500h69M485 285.500h30M490.500 283v5M496.500 283v5M503.500 283v5M510.500 283v5M578 282.500h70M578 285.500h30M584.500 283v5M590.500 283v5M597.500 283v5M604.500 283v5" />
      <Note x={526} y={285.500} w={9} h={3} /><Note x={618} y={285.500} w={9} h={3} />

      {/* main sheet */}
      <rect x="385.500" y="335.500" width="726" height="514" stroke={BLUE} strokeWidth="1.500" shapeRendering="auto" />
      <rect x="410" y="342" width="696" height="501" stroke={INK} strokeWidth="2" />
      <Note x={527} y={351.500} w={88} /><Note x={547} y={357.500} w={48} />

      {/* plan */}
      <K d="M493.500 371H641.500V486.500H493.500zM498.500 376.500h137.500v104H498.500z" />
      <K d="M615.500 376.500h20.500v20h-20.500zM620.500 381.500h10v10h-10zM615.500 376.500l5 5M636 376.500l-5 5M615.500 396.500l5-5M636 396.500l-5-5" />
      <circle cx="625.500" cy="386.500" r="2.500" stroke={INK} shapeRendering="auto" />
      <K d="M533 414.500h73M533 442.500h73" />
      <B d="M570.500 363V515M486 428.500H672" />
      <B d="M641 370.500h31M641 486.500h31M493.500 486V517M641.500 486V517M522.500 414.500h12M522.500 442.500h12" />
      <DimV x={671.500} y1={371} y2={428} /><DimV x={671.500} y1={429} y2={486} /><DimV x={522.500} y1={414} y2={443} />
      <DimH x1={493} x2={570} y={515.500} /><DimH x1={570} x2={641} y={515.500} />
      <Wheel x={550.500} y={414.500} /><Wheel x={589} y={414.500} /><Wheel x={550.500} y={442.500} round /><Wheel x={589} y={442.500} round />
      <Leader p={[[528, 404], [538, 404], [546, 412]]} /><Leader p={[[611, 404], [602, 404], [595, 412]]} />
      <Leader p={[[529, 453], [538, 453], [546, 445]]} /><Leader p={[[612, 453], [602, 453], [595, 445]]} />
      <Leader p={[[533, 460.500], [540, 460.500], [550, 447]]} /><Leader p={[[607, 460.500], [600, 460.500], [591, 447]]} />
      <Leader p={[[589, 460.500], [582, 460.500], [556, 444]]} /><B d="M582 460.500l2-13" />
      <Note x={527} y={404.500} w={4} h={4} col={BLUE} /><Note x={609} y={404.500} w={4} h={4} col={BLUE} />
      <Note x={528} y={452} w={4} h={5} col={BLUE} /><Note x={610} y={452} w={4} h={5} col={BLUE} />
      <K d="M464.500 405v74M464 405l-7 74" /><Note x={456.500} y={455} w={17} r={-82} />
      {[482, 653].map((x) => [417, 454].map((y) => (
        <g key={x + y}><K d={`M${x - 5} ${y}.5h10`} w={1.500} /><K d={`M${x + 0.500} ${y}v12`} /><path fill={INK} d={`M${x + 0.500} ${y + 2}l-2 4h4z`} /><Note x={x - 3} y={y + 9} w={2} h={5} /></g>
      )))}

      {/* section B */}
      <TransformerView dy={0} />
      <K d="M428.500 639.500H712.500V650.500H428.500zM428 642.500H712M428 648.500H712" />
      <K d="M456 638h76M608 638h76" w={4} />
      <rect x="515" y="640" width="10" height="11" fill={INK} /><rect x="615" y="640" width="10" height="11" fill={INK} />
      <path stroke={c.canvas} strokeDasharray="2 2" d="M517 643.500h6M517 647.500h6M617 643.500h6M617 647.500h6" />
      <Chock x={476.500} y={639} /><Chock x={664.500} y={639} flip />
      <B d="M494.500 548V684M645.500 548V684M457.500 640V684M531.500 640V684M609.500 640V684M682.500 640V684M520.500 650V668M620.500 650V668" />
      <DimH x1={494.500} x2={645.500} y={548.500} />
      <DimH x1={494.500} x2={520} y={667.500} /><DimH x1={620} x2={645.500} y={667.500} />
      <DimH x1={457.500} x2={494.500} y={683.500} /><DimH x1={494.500} x2={531.500} y={683.500} />
      <DimH x1={609.500} x2={645.500} y={683.500} /><DimH x1={645.500} x2={682.500} y={683.500} />
      <Leader p={[[437, 604], [445, 604], [467, 633]]} /><Leader p={[[437, 617], [444, 617], [460, 637]]} />
      <Leader p={[[538, 624], [532, 624], [522, 640]]} /><Leader p={[[438, 676], [446, 676], [473, 642]]} />
      <Leader p={[[703, 604], [696, 604], [673, 634]]} /><Leader p={[[702, 617], [696, 617], [682, 638]]} />
      <Leader p={[[601, 624], [608, 624], [619, 640]]} /><Leader p={[[741, 666], [734, 666], [709, 646]]} />
      <Note x={741} y={665.500} w={21} h={3.500} col={BLUE} />
      <Section x={589} y={607.500} dir={-1} /><Section x={710} y={607.500} dir={1} />
      <Section x={589} y={660.500} dir={-1} /><Section x={710} y={660.500} dir={1} />
      <Section x={407} y={636.500} dir={-1} /><Section x={407} y={689.500} dir={-1} />

      {/* section A */}
      <TransformerView dy={162} />
      <K d="M453.500 800.500H686.500V811.500H453.500zM453.500 803.500H686.500M453.500 809.500H686.500" />
      <Chock x={476.500} y={800} /><Chock x={664.500} y={800} flip />
      <B d="M494.500 711V808M645.500 711V808" />
      <DimH x1={494.500} x2={645.500} y={711.500} />
      <Leader p={[[437, 766], [444, 766], [467, 797]]} /><Leader p={[[703, 766], [696, 766], [673, 797]]} />
      <Leader p={[[447, 835], [454, 835], [477, 805]]} /><Leader p={[[692, 835], [687, 835], [663, 805]]} />
      <Leader p={[[715, 826], [708, 826], [683, 807]]} /><Note x={715} y={826.500} w={22} h={3.500} col={BLUE} />

      {/* rail joints */}
      <K d="M807 534.500h12M807 635.500h12" /><Note x={811} y={531} w={6} /><Note x={811} y={632} w={6} />
      <K d="M806.500 541.500h11v30h-11z" /><K d="M808.500 542v28" w={2} />
      {[579, 668].map((y) => (
        <g key={y}>
          <path fill={INK} shapeRendering="auto" d={`M810 ${y - 9}h6v6l6 1v4h-5l-2 6h-4l-2-6h-6v-4l7-1z`} />
          <B d={`M794 ${y + 13}.5H832M806.500 ${y + 1}V${y + 14}M819.500 ${y + 1}V${y + 14}M813 ${y - 12}V${y + 12}M806 ${y + 9}.5H820`} />
          <Note x={795} y={y + 11} w={4} col={BLUE} /><Note x={827} y={y + 11} w={4} col={BLUE} />
        </g>
      ))}
      <Leader p={[[787, 547], [793, 547], [809, 570]]} /><Leader p={[[786, 565], [792, 565], [803, 578]]} />
      <Leader p={[[836, 554], [831, 554], [818, 574]]} />
      <Leader p={[[787, 652], [792, 652], [804, 666]]} /><Leader p={[[836, 643], [831, 643], [818, 665]]} />

      {/* part list */}
      <K d="M880 342V409H1106M898 342V409M971 342V409M1051 342V409M1063 342V409M1081 342V409M879 360H1106" w={2} />
      <K d="M879 369.500H1106M879 379.500H1106M879 389.500H1106M879 399.500H1106" w={1.200} />
      <Note x={885} y={350} w={8} h={5} /><K d="M921 349.500h23M1000 349.500h26M1083 349.500h22" w={4} />
      <Note x={1058} y={356} w={7} r={-90} /><Note x={1066} y={347.500} w={12} /><Note x={1068} y={351.500} w={10} />
      {[365.500, 375.500, 385.500, 394, 404].map((y, i) => (
        <g key={y}>
          <Note x={887} y={y} w={2} h={5} />
          {i > 2 ? <K d={`M902 ${y}h27`} w={5} /> : <Note x={902} y={y} w={26} h={4} />}
          {i > 2 || !i ? <K d={`M975 ${y - 0.500}h25`} w={5} /> : <Note x={975} y={y} w={24} h={4} />}
          <Note x={1056} y={y} w={2} h={5} /><Note x={1070} y={y - 0.500} w={5} h={5} />
        </g>
      ))}

      {/* remarks */}
      <Note x={879} y={701} w={24} /><Note x={879} y={706.500} w={120} h={3.500} /><Note x={879} y={712.500} w={171} h={3.500} />
      <Note x={879} y={718.500} w={204} h={3.500} /><Note x={879} y={724.500} w={16} />

      {/* title block */}
      <K d="M880 843V776H1106M959 776V843M879 806H1106M959 788H1106M959 824H1106M1045 806V843M1063 806V824M1081 806V824M904 776V843M929 776V843M947 776V843M892 776V806M916 776V806" w={2} />
      <K d="M879 781.500H959M879 787.500H959M879 793.500H959M879 799.500H959M879 811.500H959M879 818.500H959M879 824.500H959M879 830.500H959M879 836.500H959M1044 812.500H1106" w={1.200} />
      <Note x={882} y={802.500} w={7} /><Note x={893} y={802.500} w={10} /><Note x={906} y={802.500} w={8} /><Note x={917} y={802.500} w={10} /><Note x={931} y={802.500} w={13} /><Note x={949} y={802.500} w={8} />
      <K d="M882 809h18M882 815h14M882 832.500h17M882 839h15" w={4} />
      <Note x={1048} y={809} w={11} /><Note x={1068} y={809} w={9} /><Note x={1088} y={809} w={12} />
      <Note x={1054} y={818} w={2} h={5} /><Note x={1073} y={818} w={2} h={5} /><Note x={1093} y={818} w={2} h={5} />
      <K d="M979 831.500h49M1047 846h15" w={4} /><Note x={979} y={837.500} w={48} />

      {/* binding margin */}
      <g shapeRendering="auto">
        <K d="M391.500 660H410M391.500 659V739.500H410M397.500 659V739M403.500 659V739M397 671.500H410M397 690.500H410M397 714.500H410M395 739V843.500H410M401.500 739V843M395 769.500H410M395 812.500H410" w={1.800} />
        <K d="M394.500 723v14M398.500 750v13M398.500 785v18M398.500 823v14" w={3} />
      </g>

      {/* part sheets */}
      <Frame x={385.500} y={895.500} w={154} h={108} />
      <TitleBlock x={469} y={982} />
      <K d="M413 937.500h76" w={5} /><K d="M509 937h8M511 939h5" w={3} />
      <B d="M413.500 938v6H488v-6M511 940v4h4v-4M409.500 934v9M407 937.500h6M407 940.500h6" /><Note x={449} y={942.500} w={4} h={3} col={BLUE} />

      <Frame x={553.500} y={895.500} w={77} h={108} side={34} />
      <Spec x={561} y={949.500} w={68} h={23} cols={[5, 27, 51, 55, 58]} /><K d="M567 976.500h14" />
      <TitleBlock x={561} y={982} />
      <Detail x={578} y={916} kind="clamp" /><Detail x={609} y={916} kind="cross" />

      <Frame x={645.500} y={895.500} w={77} h={108} side={34} />
      <Spec x={653} y={949.500} w={68} h={17} rows={5} cols={[5, 27, 51, 55, 58]} /><K d="M658 976.500h14" />
      <TitleBlock x={652} y={982} />
      <rect x="666" y="905" width="19" height="8" fill={INK} /><path stroke={c.canvas} d="M671 909.500h9" />
      <rect x="667.500" y="926.500" width="16" height="17" stroke={INK} strokeWidth="3" /><K d="M667 935h17" w={4} />
      <B d="M667.500 902v19.500h16V902M659.500 904v10M659 909.500h30M664 903.500h10M678 903.500h10M664 916.500h6M681 916.500h6M670.500 901v14M681.500 901v14M655.500 929.500v12h10v-12zM653 935.500h14M660.500 929v12M696 903l8 8M696 918l8-5M704.500 910.500h13v5h-13zM710.500 901v14M714.500 901v6" />
      <K d="M700 907h20" w={3} /><K d="M706 911h9" w={4} />

      {[735, 903].map((x) => (
        <g key={x}>
          <Frame x={x + 0.500} y={895.500} w={154} h={108} />
          <Spec x={x + 85} y={897.500} w={68} h={26} rows={8} cols={[6, 28, 52, 56, 61]} />
          <TitleBlock x={x + 84} y={982} />
          <Detail x={x + 31} y={917} kind="foot" /><Detail x={x + 31} y={969} kind="wheel" /><Detail x={x + 67} y={969} kind="wedge" />
          <K d={`M${x + 42} 912.500h5M${x + 42}.5 910v5M${x + 42} 937.500h5M${x + 42}.5 935v5M${x + 85} 975.500h14M${x + 28} 950.500h5M${x + 68} 950.500h4`} />
          <K d={`M${x + 29} 948.500h3M${x + 68} 948.500h4`} w={3} />
        </g>
      ))}
    </g>
  </ModelSpace>
);

const NavIcons = () => (
  <svg width="31" height="212" viewBox="0 0 31 212" fill="none" stroke="#c3c2c5" aria-hidden="true">
    <circle cx="25" cy="5" r="3" /><path d="M23.500 3.500l3 3M26.500 3.500l-3 3" />
    <path d="M15 19h10v11a10.500 10.500 0 1 1-10-11z" /><circle cx="15" cy="29" r="5.500" /><path d="M9 36l3-3M21 36l-3-3" />
    <path d="M13 49h5l-2.500 3zM13 119h5l-2.500 3zM13 157h5l-2.500 3z" fill="#a9a8ab" stroke="none" />
    <path d="M2 56h27M2 164h27" />
    <path d="M11 83l-7-9c1-2 4 0 6 2l-2-10c1-3 3-1 4 1l1 5 0-9c1-2 3-2 3 0l1 9 2-8c1-2 3-1 3 1l-1 8 3-5c2-1 3 0 2 2l-4 9-3 4z" />
    <path d="M4 90l16 16M19 90L4 106M4 95v-5h5M15 90h5v5M4 101v5h5" /><circle cx="19" cy="104" r="5" fill="#dddbde" /><path d="M23 108l5 5" strokeWidth="2.500" />
    <path d="M15 128l4 5h-2v16h-4v-16h-2z" /><path d="M12 137c-11 1-11 7 0 7h8c9-1 7-6-1-7M8 141l4 3-4 3" />
    <path d="M4 169h6v6H4zM12 169h6v6h-6zM20 169h6v6h-6zM4 178h16v13H4z" /><path d="M9 181l6 3.500-6 3.500z" fill="#b3b2b5" stroke="none" />
    <circle cx="25" cy="206" r="3" /><path d="M23 206h4" />
  </svg>
);

const tabs: [string, number][] = [
  ["Главная", 63], ["Вставка", 62], ["Аннотации", 81], ["Параметризация", 113], ["3D-инструменты", 113],
  ["Визуализация", 96], ["Вид", 40], ["Управление", 86], ["Вывод", 55], ["Надстройки", 86],
  ["Совместная работа", 127], ["Рекомендованные приложения", 195], ["Express Tools", 89], ["Raster Tools", 83],
];

const W = "#eef1f5";
const st = {
  grid: <S><path stroke={W} d="M3.500 0v16M8 0v16M12.500 0v16M0 3.500h16M0 8h16M0 12.500h16" /></S>,
  snap: <S><path stroke={W} strokeWidth="2" strokeDasharray="2 4" d="M1 3h14M1 8h14M1 13h14" /></S>,
  ortho: <S><path stroke={W} strokeWidth="1.300" d="M1.500 0v14.500H16M1.500 9.500h5v5" /></S>,
  polar: <S><circle stroke={W} strokeWidth="1.300" cx="7.500" cy="8.500" r="6" /><path stroke={W} strokeWidth="1.300" d="M7 9l8-8M7 9h9M11 4v5" /></S>,
  iso: <S><path stroke="#5fae5a" d="M8 1v14" /><path stroke="#d85b5b" strokeWidth="1.300" d="M2 2l12 12" /><path stroke={W} d="M6 8h4" /></S>,
  angle: <S><path stroke={W} strokeWidth="1.500" d="M15 1L2 14h14" /></S>,
  osnap: <S><rect stroke={W} strokeWidth="1.500" x="3" y="3" width="12" height="12" /><rect stroke={W} fill="#5b93c9" x="1" y="1" width="4" height="4" /></S>,
  lwt: <S><path stroke={W} strokeWidth="2" d="M1 2h14" /><path stroke={W} strokeWidth="3" d="M1 7h9M1 13h14" /><path stroke={W} d="M11 6h4" /></S>,
  ann: (extra: any) => <S><path {...F} fill={W} d="M7 1l2 5 5 9-5-2-2-3-2 3-5 2 5-9z" />{extra}</S>,
  gear: <S><circle cx="8" cy="8" r="4" stroke={W} strokeWidth="3" /><circle cx="8" cy="8" r="6.500" stroke={W} strokeWidth="3" strokeDasharray="2.600 2.500" /></S>,
  plus: <S><path stroke={W} strokeWidth="1.500" d="M8 0v16M0 8h16" /></S>,
  iso2: <S><rect stroke={W} x="1" y="1" width="5" height="5" /><circle stroke={W} cx="12" cy="6" r="3" /><path stroke={W} d="M7 10l3.500 5.500h-7z" /></S>,
  hw: <S><circle {...F} fill="#3c78b8" cx="9" cy="6" r="5.500" /><path stroke="#d7e5f4" d="M4 0v7M1 3h8" /><rect {...F} x="1" y="8" width="6" height="6" fill="#f0b93a" /><path stroke="#58b84a" strokeWidth="2.500" d="M7 11l3 3 5-6" /></S>,
  perf: <S><rect {...F} x="0" y="1" width="14" height="10" fill="#eef1f5" /><path stroke="#58a" d="M1 8l3-4 3 4 3-4" /><path {...F} fill="#e8853a" d="M11 6l5 10H6z" /></S>,
  full: <S><rect stroke={W} x=".5" y="2.500" width="15" height="11" /><path stroke={W} d="M9 7l3-2M10 5h3v3M7 9l-3 2M3 8v3h3" /></S>,
  menu: <S><path stroke={W} strokeWidth="2" d="M0 2h16M0 8h16M0 14h16" /></S>,
};

export default function App() {
  return (
    <Page>
      <Global />
      <Header>
        <AppButton aria-label="Меню приложения"><LogoA /><Arrow $color="#3c3f44" /></AppButton>
        <div>
          <TitleBar>
            <QuickAccess>
              <QuickButton aria-label="Новый">{I.newFile}</QuickButton>
              <QuickButton aria-label="Открыть">{I.open}</QuickButton>
              <QuickButton aria-label="Сохранить">{I.save}</QuickButton>
              <QuickButton aria-label="Сохранить как">{I.saveAs}</QuickButton>
              <QuickButton aria-label="Открыть с мобильного">{I.openMobile}</QuickButton>
              <QuickButton aria-label="Сохранить на мобильный">{I.saveMobile}</QuickButton>
              <QuickButton aria-label="Печать">{I.print}</QuickButton>
              <QuickButton aria-label="Отменить">{I.undo}</QuickButton>
              <QuickButton $w={12} aria-label="Список отмены"><Arrow /></QuickButton>
              <QuickButton aria-label="Вернуть">{I.redo}</QuickButton>
              <QuickButton $w={12} aria-label="Список возврата"><Arrow $color="#7b828d" /></QuickButton>
              <QuickButton $w={16} aria-label="Адаптация">{I.custom}</QuickButton>
            </QuickAccess>
            <DocTitle>{"Autodesk AutoCAD 2020   Уклон трансформатора.dwg"}</DocTitle>
            <S w={6} h={8}><path {...F} fill={c.grey} d="M1 0l4 4-4 4z" /></S>
            <SearchBox aria-label="Поиск" placeholder="Введите ключевое слово/фразу" />
            <InfoButton $w={20} aria-label="Найти">{I.binoculars}</InfoButton>
            <InfoButton $w={128}>{I.user}Вход в службы<Arrow /></InfoButton>
            <InfoButton $w={16} aria-label="Магазин">{I.cart}</InfoButton>
            <InfoButton $w={44} aria-label="Autodesk 360">{I.a360}<Arrow /></InfoButton>
            <Divider />
            <InfoButton $w={50} $gap={10} aria-label="Справка">
              <S n={14}><circle {...F} fill="#e9eef6" cx="7" cy="7" r="7" /><path stroke="#2a5db0" strokeWidth="2" d="M4.500 5.500c0-3.500 5-3 5-.5 0 2-2.500 1.500-2.500 4M7 10v2" /></S>
              <Arrow />
            </InfoButton>
            <WindowButtons>
              <QuickButton aria-label="Свернуть">{I.min}</QuickButton>
              <QuickButton $w={25} aria-label="Развернуть">{I.max}</QuickButton>
              <QuickButton aria-label="Закрыть">{I.close}</QuickButton>
            </WindowButtons>
          </TitleBar>
          <TabBar>
            {tabs.map(([t, w], i) => <RibbonTab key={t} $w={w} $active={i === 0}>{t}</RibbonTab>)}
            <InfoButton $w={68} aria-label="Свернуть ленту">
              <S w={14} h={8}><rect {...F} width="14" height="8" rx="2" fill={c.grey} /><path {...F} fill={c.bar} d="M4 5h6L7 2z" /></S>
              <Arrow />
            </InfoButton>
          </TabBar>
        </div>
      </Header>

      <Workspace>
        <Ribbon>
          <RibbonPanel w={260} name="Рисование">
            <Big w={54} icon={I.line} label="Отрезок" />
            <Big w={68} icon={I.pline} label="Полилиния" />
            <Big w={48} icon={I.circle} label="Круг" menu />
            <Big w={46} icon={I.arc} label="Дуга" menu />
            <ToolGrid $cols="30px" $pad={6}>
              <Small icon={I.rect} label="Прямоугольник" menu />
              <Small icon={I.ellipse} label="Эллипс" menu />
              <Small icon={I.hatch} label="Штриховка" menu />
            </ToolGrid>
          </RibbonPanel>
          <RibbonPanel w={132} name="Редактирование">
            <ToolGrid $cols="30px 30px 40px 16px" $pad={6}>
              <Small icon={I.move} label="Перенести" /><Small icon={I.rotate} label="Повернуть" />
              <Small icon={I.trim} label="Обрезать" menu /><Small icon={I.erase} label="Стереть" />
              <Small icon={I.copy} label="Копировать" /><Small icon={I.mirror} label="Зеркало" />
              <Small icon={I.fillet} label="Сопряжение" menu /><Small icon={I.explode} label="Расчленить" />
              <Small icon={I.stretch} label="Растянуть" /><Small icon={I.scale} label="Масштаб" />
              <Small icon={I.array} label="Массив" menu /><Small icon={I.offset} label="Подобие" />
            </ToolGrid>
          </RibbonPanel>
          <RibbonPanel w={140} name="Аннотации">
            <Big w={56} icon={I.text} label="Текст" menu />
            <Big w={42} icon={I.dimension} label="Размер" />
            <ToolGrid $cols="30px" $pad={7}>
              <Small icon={I.dimLinear} label="Линейный" menu />
              <Small icon={I.leader} label="Выноска" menu />
              <Small icon={I.table} label="Таблица" />
            </ToolGrid>
          </RibbonPanel>
          <RibbonPanel w={269} name="Слои" grow>
            <Big w={58} icon={I.layerProps} label={"Свойства\nслоя"} />
            <Stack>
              <Combo>
                <S w={52} h={18}><Bulb x={6} y={7} r={5} /><Sun x={24} y={9} r={4} /><Lock x={37} y={5} s={1.300} open /></S>
                <Swatch />
                <Select aria-label="Слой"><option>0</option></Select>
                <Arrow $big />
              </Combo>
              <ToolGrid $cols="repeat(5, 24px)" $pad={3} $top={0}>
                {layerIcons.map(([l, ic]) => <Small key={l} icon={ic} label={l} />)}
              </ToolGrid>
            </Stack>
          </RibbonPanel>
          <RibbonPanel w={85} name="Блок">
            <Big w={48} icon={I.insert} label="Вставка" menu />
            <ToolGrid $cols="30px" $pad={2}>
              <Small icon={<S><BlockShape /><Sun x={12} y={3.500} r={2} /></S>} label="Создать блок" />
              <Small icon={<S><BlockShape /><Pencil x={8} y={1} /></S>} label="Редактировать блок" />
              <Small icon={<S><path {...F} fill={c.grey} d="M0 2h9l6 6-6 7-7-6z" /><path stroke={c.panel} strokeWidth="1.500" d="M4 7l4 4 3-5" /><Pencil x={8} y={1} /></S>} label="Атрибуты" menu />
            </ToolGrid>
          </RibbonPanel>
          <RibbonPanel w={242} name="Свойства" launcher>
            <Big w={84} icon={I.copyProps} label={"Копирование\nсвойств"} />
            <PropRows>
              <PropRow>
                <S>{["#f5b942", "#ef6a4c", "#d95bb5", "#7b62dd", "#4aa3ee", "#6cc66a"].map((f, i) => (
                  <path key={f} {...F} fill={f} transform={`rotate(${i * 60} 8 8)`} d="M8 8V0a8 8 0 0 1 6.930 4z" />
                ))}</S>
                <Combo><Swatch $edge /><Select aria-label="Цвет"><option>ПоСлою</option></Select><Arrow $big /></Combo>
              </PropRow>
              <PropRow>
                <S><path d="M0 1.500h16" /><path strokeWidth="2" d="M0 5h16" /><path strokeWidth="3" d="M0 9.500h16" /><path strokeWidth="3" d="M0 14.500h16" /></S>
                <Combo><Stroke /><Select aria-label="Вес линий"><option>ПоСлою</option></Select><Arrow $big /></Combo>
              </PropRow>
              <PropRow>
                <S><path strokeDasharray="1 1" d="M0 2.500h16" /><path strokeDasharray="3 1" d="M0 6.500h16" /><path strokeDasharray="2 1" d="M0 10.500h16" /><path strokeDasharray="4 2" d="M0 14.500h16" /></S>
                <Combo><Stroke /><Select aria-label="Тип линий"><option>ПоСл...</option></Select><Arrow $big /></Combo>
              </PropRow>
            </PropRows>
          </RibbonPanel>
          <RibbonPanel w={74} name="Группы">
            <Big w={48} icon={I.group} label="Группа" />
            <ToolGrid $cols="16px" $pad={4}>
              <Small icon={<S><rect x="2" y="2" width="5" height="4" stroke={c.blue} /><circle cx="4.500" cy="11" r="2.500" /><path stroke="#f2f2f2" d="M9 .5h2.500v15H9" /><path stroke={c.red} strokeWidth="2" d="M9 5l6 6M15 5l-6 6" /></S>} label="Разгруппировать" />
              <Small icon={<S><GroupShape /><path stroke="#f2f2f2" d="M9 1.500h2v5" /><Pencil x={9} y={8} /></S>} label="Редактировать группу" />
              <Small icon={<S><GroupShape col="#62c77c" /><Pointer x={9} y={4} /></S>} label="Выбор группы" />
            </ToolGrid>
          </RibbonPanel>
          <RibbonPanel w={105} name="Утилиты">
            <Big w={80} icon={I.measure} label="Измерить" menu />
            <ToolGrid $cols="16px" $pad={3}>
              <Small icon={<S><path {...F} fill={c.yellow} d="M8 0l1 3 3 1-3 1-1 3-1-3-2-1 2-1z" /><rect {...F} x="7" y="7" width="9" height="9" fill="#eef3fa" /><path stroke="#3d7fc2" d="M9 9.500h1M11 9.500h4M9 11.500h1M11 11.500h4M9 13.500h1M11 13.500h4" /><Pointer x={0} y={3} /></S>} label="Быстрый выбор" />
              <Small icon={<S><rect x=".5" y=".5" width="14" height="14" stroke="#62c77c" strokeDasharray="2 1" /><path stroke="#62c77c" strokeWidth="2" d="M4 5v7h7M7 3h5v5" /><Pointer x={9} y={5} /></S>} label="Выбрать все" />
              <Small icon={<S><rect {...F} x="2" width="12" height="16" fill={c.grey} /><path {...F} fill="#4b5768" d="M4 2h8v2H4z" /><path stroke="#4b5768" strokeWidth="2" strokeDasharray="2 1" d="M4 7h8M4 10h8M4 13h8" /></S>} label="Калькулятор" />
            </ToolGrid>
          </RibbonPanel>
          <RibbonPanel w={99} name="Буфер обмена" menu={false}>
            <Big w={74} icon={I.paste} label="Вставить" menu />
            <ToolGrid $cols="16px" $pad={3}>
              <Small icon={<S><rect {...F} width="12" height="14" fill={c.grey} /><path stroke="#4b5768" d="M2 3.500h8M2 6.500h6M2 9.500h4" /><path stroke={c.panel} strokeWidth="3" d="M6 6l8 7M15 6l-8 7" /><path stroke="#fff" d="M6 6l8 7M15 6l-8 7" /><circle stroke="#fff" cx="7.500" cy="14" r="1.500" /><circle stroke="#fff" cx="14" cy="14" r="1.500" /></S>} label="Вырезать" />
              <Small icon={<S><path {...F} fill={c.grey} d="M1 0h8v2H4v9H1z" /><path {...F} fill={c.grey} d="M5 4h6l3 3v9H5z" /><path {...F} fill="#fff" d="M11 3l3 3h-3z" /></S>} label="Копировать в буфер" />
            </ToolGrid>
          </RibbonPanel>
          <RibbonPanel w={69} name="Вид" launcher>
            <Big w={69} icon={I.base} label="Базовый" menu />
          </RibbonPanel>
        </Ribbon>

        <FileTabs>
          <FileTab $w={123}><TabName>Начало</TabName></FileTab>
          <FileTab $w={178} $active>
            <TabName>Уклон трансформатора*</TabName>
            <CloseTab aria-label="Закрыть вкладку"><S n={8}><path stroke="#c4c9d0" strokeWidth="1.500" d="M0 0l8 8M8 0L0 8" /></S></CloseTab>
          </FileTab>
          <AddTab aria-label="Новая вкладка"><S n={8}><path strokeWidth="1.500" d="M4 0v8M0 4h8" /></S></AddTab>
        </FileTabs>

        <Viewport>
          <Drawing />
          <ViewLabel>[−][Сверху][2D-каркас]</ViewLabel>
          <DocControls>
            <button aria-label="Свернуть окно"><S w={14} h={16}><rect x="1.500" y="8.500" width="11" height="4" fill="#fff" stroke="#555" /></S></button>
            <button aria-label="Восстановить окно"><S w={14} h={16}><path fill="#fff" stroke="#555" d="M4.500 2.500h8v8h-2M1.500 5.500h8v8h-8zM4.500 8.500h2v2h-2z" /></S></button>
            <button aria-label="Закрыть окно"><S w={14} h={16}><path fill="#fff" stroke="#555" d="M2.500 3.500h3L7 5.500l1.500-2h3v2L9.500 8l2 2.500v2h-3L7 10.500l-1.500 2h-3v-2L4.500 8l-2-2.500z" /></S></button>
          </DocControls>
          <ViewCube>
            <Compass $area="1 / 2">С</Compass>
            <Compass $area="2 / 1">З</Compass>
            <CubeFace>Сверху</CubeFace>
            <Compass $area="2 / 3">В</Compass>
            <Compass $area="3 / 2">Ю</Compass>
          </ViewCube>
          <Wcs>МСК<S w={9} h={7}><path stroke="#a3a3ac" d="M1 1h7L4.500 6z" /></S></Wcs>
          <NavBar><NavIcons /></NavBar>
          <Ucs width="80" height="80" viewBox="0 0 80 80" fill="none" stroke="#222" aria-hidden="true">
            <path d="M6.500 10v60H57M2.500 65.500h8v8h-8z" />
            <path strokeWidth="1.300" d="M61 56l12 12M73 56L61 68M8 3l6 6M20 3l-6 6v6" />
          </Ucs>
          <Cursor width="50" height="60" viewBox="0 0 50 60" fill="none" stroke="#111" aria-hidden="true">
            <path d="M0 49.500h45M47.500 0v46M45.500 47.500h5v4h-5z" />
          </Cursor>
        </Viewport>

        <StatusBar>
          <LayoutTabs>
            <LayoutTab $w={60} $active>Модель</LayoutTab>
            <LayoutTab $w={64}>Лист1</LayoutTab>
            <LayoutTab $w={48}>Лист2</LayoutTab>
            <LayoutTab $w={38} aria-label="Новый лист">+</LayoutTab>
          </LayoutTabs>
          <StatusTools>
            <StatusGroup><StatusButton $w={57}>МОДЕЛЬ</StatusButton></StatusGroup>
            <StatusGroup>
              <StatusButton aria-label="Сетка">{st.grid}</StatusButton>
              <StatusButton aria-label="Привязка">{st.snap}</StatusButton>
              <StatusButton $w={14} aria-label="Настройки привязки"><Arrow /></StatusButton>
            </StatusGroup>
            <StatusGroup>
              <StatusButton aria-label="Орто">{st.ortho}</StatusButton>
              <StatusButton $on aria-label="Полярное отслеживание">{st.polar}</StatusButton>
              <StatusButton $w={16} aria-label="Углы"><Arrow /></StatusButton>
              <StatusButton aria-label="Изометрия">{st.iso}</StatusButton>
              <StatusButton $w={16} aria-label="Плоскости"><Arrow /></StatusButton>
              <StatusButton $on aria-label="Отслеживание">{st.angle}</StatusButton>
              <StatusButton $on aria-label="Объектная привязка">{st.osnap}</StatusButton>
              <StatusButton $w={16} aria-label="Режимы привязки"><Arrow /></StatusButton>
              <StatusButton $on aria-label="Вес линий">{st.lwt}</StatusButton>
            </StatusGroup>
            <StatusGroup>
              <StatusButton $on aria-label="Видимость аннотаций">{st.ann(<circle stroke={W} cx="12.500" cy="3.500" r="2" />)}</StatusButton>
              <StatusButton aria-label="Автомасштаб">{st.ann(<path stroke={W} d="M14 0l-3 3h3l-3 3" />)}</StatusButton>
              <StatusButton aria-label="Масштаб аннотаций">{st.ann(null)}</StatusButton>
              <StatusButton $w={32}>1:1<S w={3} h={3} /><Arrow /></StatusButton>
            </StatusGroup>
            <StatusGroup>
              <StatusButton aria-label="Рабочее пространство">{st.gear}</StatusButton>
              <StatusButton $w={14} aria-label="Пространства"><Arrow /></StatusButton>
            </StatusGroup>
            <StatusGroup><StatusButton aria-label="Монитор аннотаций">{st.plus}</StatusButton></StatusGroup>
            <StatusGroup><StatusButton aria-label="Изоляция объектов">{st.iso2}</StatusButton></StatusGroup>
            <StatusGroup>
              <StatusButton aria-label="Ускорение графики">{st.hw}</StatusButton>
              <StatusButton aria-label="Производительность">{st.perf}</StatusButton>
            </StatusGroup>
            <StatusGroup>
              <StatusButton aria-label="Очистить экран">{st.full}</StatusButton>
              <StatusButton aria-label="Адаптация">{st.menu}</StatusButton>
            </StatusGroup>
          </StatusTools>
        </StatusBar>
      </Workspace>
    </Page>
  );
}
